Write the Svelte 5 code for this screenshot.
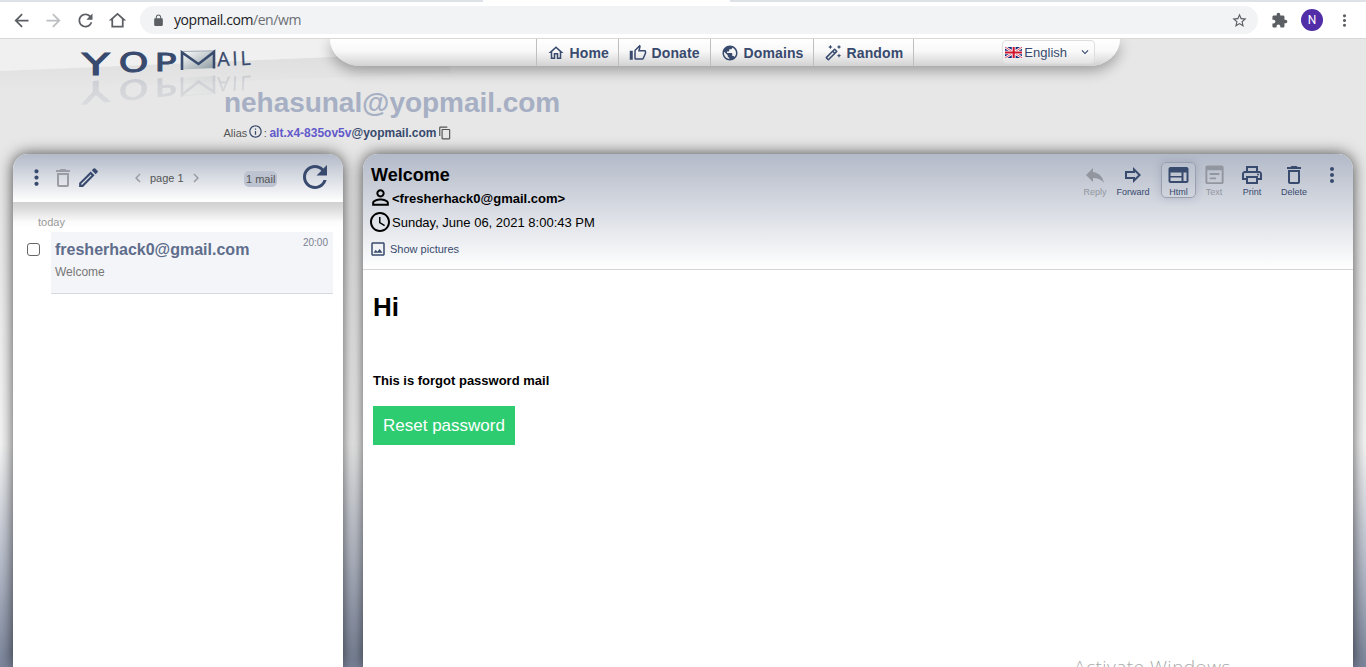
<script>
  const icons = {
    back: 'M20 11H7.83l5.59-5.59L12 4l-8 8 8 8 1.41-1.41L7.83 13H20v-2z',
    next: 'M12 4l-1.41 1.41L16.17 11H4v2h12.17l-5.58 5.59L12 20l8-8z',
    refresh: 'M17.65 6.35C16.2 4.9 14.21 4 12 4c-4.42 0-7.99 3.58-7.99 8s3.57 8 7.99 8c3.73 0 6.84-2.55 7.73-6h-2.08c-.82 2.33-3.04 4-5.65 4-3.31 0-6-2.69-6-6s2.69-6 6-6c1.66 0 3.14.69 4.22 1.78L13 11h7V4l-2.35 2.35z',
    house: 'M12 5.69l5 4.5V18H7v-7.81l5-4.5M12 3L2 12h3v8h14v-8h3L12 3z',
    home: 'M12 5.69l5 4.5V18h-2v-6H9v6H7v-7.81l5-4.5M12 3L2 12h3v8h6v-6h2v6h6v-8h3L12 3z',
    lock: 'M18 8h-1V6c0-2.76-2.24-5-5-5S7 3.24 7 6v2H6c-1.1 0-2 .9-2 2v10c0 1.1.9 2 2 2h12c1.1 0 2-.9 2-2V10c0-1.1-.9-2-2-2zM15.1 8H8.9V6c0-1.71 1.39-3.1 3.1-3.1s3.1 1.39 3.1 3.1v2z',
    star: 'M22 9.24l-7.19-.62L12 2 9.19 8.63 2 9.24l5.46 4.73L5.82 21 12 17.27 18.18 21l-1.63-7.03L22 9.24zM12 15.4l-3.76 2.27 1-4.28-3.32-2.88 4.38-.38L12 6.1l1.71 4.04 4.38.38-3.32 2.88 1 4.28L12 15.4z',
    puzzle: 'M20.5 11H19V7c0-1.1-.9-2-2-2h-4V3.5C13 2.12 11.88 1 10.5 1S8 2.12 8 3.5V5H4c-1.1 0-1.99.9-1.99 2v3.8H3.5c1.49 0 2.7 1.21 2.7 2.7s-1.21 2.7-2.7 2.7H2V20c0 1.1.9 2 2 2h3.8v-1.5c0-1.49 1.21-2.7 2.7-2.7 1.49 0 2.7 1.21 2.7 2.7V22H17c1.1 0 2-.9 2-2v-4h1.5c1.38 0 2.5-1.12 2.5-2.5S21.88 11 20.5 11z',
    more: 'M12 8c1.1 0 2-.9 2-2s-.9-2-2-2-2 .9-2 2 .9 2 2 2zm0 2c-1.1 0-2 .9-2 2s.9 2 2 2 2-.9 2-2-.9-2-2-2zm0 6c-1.1 0-2 .9-2 2s.9 2 2 2 2-.9 2-2-.9-2-2-2z',
    thumb: 'M9 21h9c.83 0 1.54-.5 1.84-1.22l3.02-7.05c.09-.23.14-.47.14-.73v-2c0-1.1-.9-2-2-2h-6.31l.95-4.57.03-.32c0-.41-.17-.79-.44-1.06L14.17 1 7.58 7.59C7.22 7.95 7 8.45 7 9v10c0 1.1.9 2 2 2zM9 9l4.34-4.34L12 10h9v2l-3 7H9V9zM1 9h4v12H1z',
    globe: 'M12 2C6.48 2 2 6.48 2 12s4.48 10 10 10 10-4.48 10-10S17.52 2 12 2zm-1 17.93c-3.95-.49-7-3.85-7-7.93 0-.62.08-1.21.21-1.79L9 15v1c0 1.1.9 2 2 2v1.93zm6.9-2.54c-.26-.81-1-1.39-1.9-1.39h-1v-3c0-.55-.45-1-1-1H8v-2h2c.55 0 1-.45 1-1V7h2c1.1 0 2-.9 2-2v-.41c2.93 1.19 5 4.06 5 7.41 0 2.08-.8 3.97-2.1 5.39z',
    wand: 'M20 7l.94-2.06L23 4l-2.06-.94L20 1l-.94 2.06L17 4l2.06.94zM8.5 7l.94-2.06L11.5 4l-2.06-.94L8.5 1l-.94 2.06L5.5 4l2.06.94zM20 12.5l-.94 2.06-2.06.94 2.06.94.94 2.06.94-2.06L23 15.5l-2.06-.94zM17.71 9.12l-2.83-2.83C14.68 6.1 14.43 6 14.17 6c-.26 0-.51.1-.71.29L2.29 17.46c-.39.39-.39 1.02 0 1.41l2.83 2.83c.2.2.45.3.71.3s.51-.1.71-.29l11.17-11.17c.39-.39.39-1.03 0-1.42zm-3.54-.7l1.41 1.41L14.41 11 13 9.59l1.17-1.17zM5.83 19.59l-1.41-1.41L11.59 11 13 12.41l-7.17 7.18z',
    copy: 'M16 1H4c-1.1 0-2 .9-2 2v14h2V3h12V1zm3 4H8c-1.1 0-2 .9-2 2v14c0 1.1.9 2 2 2h11c1.1 0 2-.9 2-2V7c0-1.1-.9-2-2-2zm0 16H8V7h11v14z',
    info: 'M11 7h2v2h-2zm0 4h2v6h-2zm1-9C6.48 2 2 6.48 2 12s4.48 10 10 10 10-4.48 10-10S17.52 2 12 2zm0 18c-4.41 0-8-3.59-8-8s3.59-8 8-8 8 3.59 8 8-3.59 8-8 8z',
    trash: 'M6 19c0 1.1.9 2 2 2h8c1.1 0 2-.9 2-2V7H6v12zM8 9h8v10H8V9zm7.5-5l-1-1h-5l-1 1H5v2h14V4z',
    edit: 'M14.06 9.02l.92.92L5.92 19H5v-.92l9.06-9.06M17.66 3c-.25 0-.51.1-.7.29l-1.83 1.83 3.75 3.75 1.83-1.83c.39-.39.39-1.02 0-1.41l-2.34-2.34c-.2-.2-.45-.29-.71-.29zm-3.6 3.19L3 17.25V21h3.75L17.81 9.94l-3.75-3.75z',
    left: 'M15.41 7.41L14 6l-6 6 6 6 1.41-1.41L10.83 12z',
    right: 'M10 6L8.59 7.41 13.17 12l-4.58 4.59L10 18l6-6z',
    down: 'M7.41 8.59L12 13.17l4.59-4.58L18 10l-6 6-6-6z',
    person: 'M12 5.9c1.16 0 2.1.94 2.1 2.1s-.94 2.1-2.1 2.1S9.9 9.16 9.9 8s.94-2.1 2.1-2.1m0 9c2.97 0 6.1 1.46 6.1 2.1v1.1H5.9V17c0-.64 3.13-2.1 6.1-2.1M12 4C9.79 4 8 5.79 8 8s1.79 4 4 4 4-1.79 4-4-1.79-4-4-4zm0 9c-2.67 0-8 1.34-8 4v3h16v-3c0-2.66-5.33-4-8-4z',
    clock: 'M11.99 2C6.47 2 2 6.48 2 12s4.47 10 9.99 10C17.52 22 22 17.52 22 12S17.52 2 11.99 2zM12 20c-4.42 0-8-3.58-8-8s3.58-8 8-8 8 3.58 8 8-3.58 8-8 8zm.5-13H11v6l5.25 3.15.75-1.23-4.5-2.67z',
    image: 'M19 5v14H5V5h14m0-2H5c-1.1 0-2 .9-2 2v14c0 1.1.9 2 2 2h14c1.1 0 2-.9 2-2V5c0-1.1-.9-2-2-2zm-4.86 8.86l-3 3.87L9 13.14 6 17h12l-3.86-5.14z',
    reply: 'M10 9V5l-7 7 7 7v-4.1c5 0 8.5 1.6 11 5.1-1-5-4-10-11-11z',
    forward: 'M14 8.83L17.17 12 14 15.17V14H6v-4h8V8.83M12 4v4H4v8h8v4l8-8-8-8z',
    html: 'M20 4H4c-1.1 0-2 .9-2 2v12c0 1.1.9 2 2 2h16c1.1 0 2-.9 2-2V6c0-1.1-.9-2-2-2zM15 18H4v-3.5h11V18zM15 13H4V9.5h11V13zM20 18h-3V9.5h3V18z',
    text: 'M19.5 2h-15C3.1 2 2.5 2.9 2.5 4v15.5c0 1.1.9 2 2 2h15c1.1 0 2-.9 2-2V4c0-1.1-.9-2-2-2zm0 17.5h-15V7h15v12.5zM17 10v2H7v-2zM13.5 14.5v2H7v-2z',
    print: 'M19 8h-1V3H6v5H5c-1.66 0-3 1.34-3 3v6h4v4h12v-4h4v-6c0-1.66-1.34-3-3-3zM8 5h8v3H8V5zm8 12v2H8v-4h8v2zm2-2v-2H6v2H4v-4c0-.55.45-1 1-1h14c.55 0 1 .45 1 1v4h-2zM18 10.5a1 1 0 1 0 0 2 1 1 0 0 0 0-2z'
  };

  const menu = [
    { label: 'Home', icon: 'home', width: 82 },
    { label: 'Donate', icon: 'thumb', width: 92 },
    { label: 'Domains', icon: 'globe', width: 103 },
    { label: 'Random', icon: 'wand', width: 100 }
  ];

  const tools = [
    { label: 'Reply', icon: 'reply', width: 36, off: true },
    { label: 'Forward', icon: 'forward', width: 40 },
    { label: 'Html', icon: 'html', width: 35, on: true },
    { label: 'Text', icon: 'text', width: 36, off: true },
    { label: 'Print', icon: 'print', width: 40 },
    { label: 'Delete', icon: 'trash', width: 44 }
  ];
</script>

{#snippet icon(name, size)}
  <svg class="icon" viewBox="0 0 24 24" width={size} height={size}><path fill-rule={name === 'text' ? 'evenodd' : 'nonzero'} d={icons[name]} /></svg>
{/snippet}

{#snippet wordmark()}
  <g fill="#384a6e" stroke="#384a6e" font-family="DejaVu Sans, sans-serif">
    <text transform="translate(82 35.5) scale(1.53 1)" font-size="29.5" stroke-width="1">Y</text>
    <text transform="translate(118.8 33.2) scale(1.42 1)" font-size="26.5" stroke-width="1">O</text>
    <text transform="translate(154.4 31.8) scale(1.5 1)" font-size="24.5" stroke-width=".8">P</text>
  </g>
  <path d="M181 12.5 214.5 11.8V29L181 30.5Z" fill="url(#paper)" />
  <path d="M181 12.5 214.5 11.8" stroke="#8e98a8" stroke-width=".8" />
  <path d="M182 31V13.5L198.5 25 214 13V29.5" fill="none" stroke="#384a6e" stroke-width="2.6" />
  <text transform="translate(217.5 27.2) rotate(-2.5)" font-size="19.5" textLength="33.5" lengthAdjust="spacing" fill="#384a6e" stroke="#384a6e" stroke-width=".3" font-family="Open Sans, sans-serif">AIL</text>
{/snippet}

<div class="screen">
  <div class="chrome">
    <div class="tabs"><i></i></div>
    <div class="bar">
      <div class="nav">
        {@render icon('back', 21)}
        <span class="faded">{@render icon('next', 21)}</span>
        {@render icon('refresh', 21)}
        {@render icon('house', 21)}
      </div>
      <div class="address">
        <span class="lock">{@render icon('lock', 13)}</span>
        <span class="url">yopmail.com<em>/en/wm</em></span>
        {@render icon('star', 17)}
      </div>
      <div class="extras">
        {@render icon('puzzle', 17)}
        <b class="avatar">N</b>
        {@render icon('more', 19)}
      </div>
    </div>
  </div>

  <div class="page">
    <svg class="slope" width="900" height="60" viewBox="0 0 900 60">
      <defs>
        <linearGradient id="fold" x1="0" y1="0" x2="0" y2="1">
          <stop offset="0" stop-color="#dedede" /><stop offset="1" stop-color="#e7e7e7" />
        </linearGradient>
      </defs>
      <path d="M0 32 L450 13 V34 L0 52Z" fill="url(#fold)" />
      <path d="M0 0H450V13L0 32Z" fill="#f0f0f0" />
    </svg>

    <header>
      <svg class="logo" width="224" height="75" viewBox="0 0 224 75">
        <defs>
          <linearGradient id="paper" x1="0" y1="0" x2="1" y2="1">
            <stop offset="0" stop-color="#fff" /><stop offset="1" stop-color="#8b999f" />
          </linearGradient>
          <linearGradient id="fade" x1="0" y1="34" x2="0" y2="67" gradientUnits="userSpaceOnUse">
            <stop offset="0" stop-color="#fff" stop-opacity=".16" /><stop offset="1" stop-color="#fff" stop-opacity=".07" />
          </linearGradient>
          <mask id="mirror" maskUnits="userSpaceOnUse" x="60" y="20" width="220" height="60">
            <rect x="60" y="20" width="220" height="60" fill="url(#fade)" />
          </mask>
        </defs>
        {@render wordmark()}
        <g mask="url(#mirror)"><g transform="matrix(1 -.1 0 -1 0 87.5)">{@render wordmark()}</g></g>
      </svg>

      <div class="main">
        <nav class="menu">
          {#each menu as item}
            <a style:width="{item.width}px">{@render icon(item.icon, 18)}<span>{item.label}</span></a>
          {/each}
          <div class="end"></div>
          <div class="lang">
            <svg width="18" height="11" viewBox="0 0 18 12" preserveAspectRatio="none">
              <rect width="18" height="12" fill="#14297c" />
              <path d="M0 0 18 12M18 0 0 12" stroke="#fff" stroke-width="2.6" />
              <path d="M0 0 18 12M18 0 0 12" stroke="#d0142c" stroke-width=".8" />
              <path d="M9 0V12M0 6H18" stroke="#fff" stroke-width="4" />
              <path d="M9 0V12M0 6H18" stroke="#d0142c" stroke-width="2.2" />
            </svg>
            <span>English</span>
            {@render icon('down', 14)}
          </div>
        </nav>
        <h1>nehasunal@yopmail.com</h1>
        <div class="alias">
          <span>Alias</span><span class="info">{@render icon('info', 15)}</span><span class="colon">:</span>
          <b><i>alt.x4-835ov5v</i>@yopmail.com</b>{@render icon('copy', 14)}
        </div>
      </div>
    </header>

    <main>
      <aside class="panel inbox">
        <div class="listbar">
          {@render icon('more', 25)}
          <span class="trash">{@render icon('trash', 24)}</span>
          {@render icon('edit', 25)}
          <div class="pager">{@render icon('left', 18)}<span>page 1</span>{@render icon('right', 18)}</div>
          <span class="count">1 mail</span>
          <span class="reload">{@render icon('refresh', 36)}</span>
        </div>
        <div class="list">
          <div class="day">today</div>
          <div class="mail">
            <span class="check"></span>
            <div class="card">
              <div class="line"><b>fresherhack0@gmail.com</b><small>20:00</small></div>
              <p>Welcome</p>
            </div>
          </div>
        </div>
      </aside>

      <section class="panel reader">
        <div class="head">
          <div class="meta">
            <h2>Welcome</h2>
            <div class="from">{@render icon('person', 25)}<b>&lt;fresherhack0@gmail.com&gt;</b></div>
            <div class="date">{@render icon('clock', 24)}<span>Sunday, June 06, 2021 8:00:43 PM</span></div>
            <div class="pics">{@render icon('image', 18)}<span>Show pictures</span></div>
          </div>
          <div class="tools">
            {#each tools as t}
              <div class="tool" class:off={t.off} class:on={t.on} style:width="{t.width}px">
                {@render icon(t.icon, t.icon === 'text' ? 23 : t.icon === 'html' ? 25 : 24)}<span>{t.label}</span>
              </div>
            {/each}
            <div class="dots">{@render icon('more', 24)}</div>
          </div>
        </div>
        <article>
          <h3>Hi</h3>
          <p>This is forgot password mail</p>
          <a>Reset password</a>
        </article>
      </section>
    </main>
  </div>
  <div class="watermark">Activate Windows</div>
</div>

<style>
  :global(body) { margin: 0; overflow: hidden; }
  .screen, .screen * { box-sizing: border-box; }
  .screen {
    position: relative; display: flex; flex-direction: column;
    width: 1366px; height: 667px; overflow: hidden;
    font-family: "Liberation Sans", Arial, sans-serif; color: #384a6e;
  }
  .icon { display: block; flex: none; fill: currentColor; }
  em, i { font-style: normal; }

  .chrome { height: 39px; background: #fff; border-bottom: 1px solid #d8d8d8; color: #5b5f64; }
  .tabs { height: 2px; background: #dee1e6; padding-left: 483px; }
  .tabs i { display: block; width: 247px; height: 2px; background: #fff; }
  .bar { display: flex; align-items: center; height: 36px; }
  .nav { display: flex; gap: 11px; padding-left: 11px; width: 140px; }
  .faded { color: #bcbec1; }
  .address {
    display: flex; align-items: center; width: 1118px; height: 28px; padding: 0 10px 0 12px;
    border-radius: 14px; background: #f1f3f4;
  }
  .url { flex: 1; margin-left: 9px; font: 14px/20px "Open Sans", "Noto Sans", sans-serif; letter-spacing: -.42px; color: #202124; }
  .url em { color: #6b6f74; }
  .extras { display: flex; align-items: center; padding-left: 13px; }
  .avatar {
    width: 22px; height: 22px; margin: 0 12px 0 13px; border-radius: 50%; background: #512da8; color: #fff;
    font: 12px/22px Roboto, sans-serif; text-align: center;
  }

  .page {
    position: relative; display: flex; flex-direction: column; height: 628px;
    background: linear-gradient(#e7e7e7 0, #e7e7e7 120px, #f8f8f8 405px, #b9bfcd 525px, #7c869c 628px);
  }
  .slope { position: absolute; left: 0; top: 0; }
  header { position: relative; display: flex; height: 115.5px; }
  .logo { flex: none; overflow: visible; }
  .menu {
    display: flex; width: 790px; height: 27px; margin-left: 106px; padding-left: 206px;
    border-radius: 0 0 30px 30px / 0 0 27px 27px;
    background: linear-gradient(#fff, #f8f8f8 45%, #d2d2d2);
    box-shadow: 0 5px 14px rgba(0, 0, 0, .32);
    clip-path: inset(0 -30px -30px -30px);
  }
  .menu a, .end { display: flex; align-items: center; border-left: 1px solid #bfbfbf; }
  .menu a { padding-left: 10px; gap: 4.5px; font: bold 14px/27px "Liberation Sans", sans-serif; letter-spacing: .12px; }
  .menu a span { padding-top: 1px; }
  .end { width: 89px; }
  .lang {
    display: flex; align-items: center; width: 93px; height: 24px; margin-top: 1px; padding: 0 2px;
    border: 1px solid #dedede; border-radius: 4px; font-size: 13px; background: rgba(255, 255, 255, .25);
  }
  .lang span { margin: 0 11px 0 2px; }
  h1 { margin: 21px 0 0; font-size: 28px; line-height: 32px; letter-spacing: -.04px; color: #a6afc3; }
  .alias { display: flex; align-items: center; height: 20px; margin: 4px 0 0 -.5px; font-size: 11px; color: #555; }
  .info { margin: -4px 0 0 .5px; color: #384a6e; }
  .colon { margin: 0 2.5px 0 1px; }
  .alias b { font-size: 12px; color: #384a6e; margin-right: 1px; }
  .alias b i { color: #6259ca; }

  main { position: relative; display: flex; gap: 20px; height: 513px; padding-left: 13px; }
  .panel { background: #fff; border-radius: 15px 15px 0 0; box-shadow: 0 0 15px rgba(0, 0, 0, .7); }
  .inbox { width: 330px; }
  .listbar {
    position: relative; display: flex; align-items: center; height: 47.5px; padding: 0 0 1px 11px; border-radius: 15px 15px 0 0;
    background: linear-gradient(#b3bac8, #fff);
  }
  .list { background: linear-gradient(#d0d0d0 0, #dadada 6px, #fbfbfb 20px, #fff 26px); }
  .trash { margin: 0 1px 0 1.5px; color: #9a9da4; }
  .pager { display: flex; align-items: center; margin-left: 28.5px; font-size: 11px; color: #555; gap: 3px; }
  .pager .icon { color: #9a9da6; }
  .count { margin: 2px 0 0 39.5px; width: 33px; height: 16px; border-radius: 5px; background: #bdc3d0; color: #555; font-size: 11px; line-height: 16px; text-align: center; white-space: nowrap; }
  .reload { margin: -2px 0 0 19.5px; }
  .day { padding: 13px 0 0 25px; height: 30px; font-size: 11px; line-height: 14px; color: #999; }
  .mail { display: flex; }
  .check { width: 13px; height: 13px; margin: 11px 11px 0 14px; border: 1px solid #666; border-radius: 3px; background: #fff; }
  .card { width: 282px; height: 62px; padding: 9px 5px 0 4px; background: #f4f5f8; border-bottom: 1px solid #d5d9e2; }
  .line { display: flex; justify-content: space-between; }
  .line b { font-size: 16px; line-height: 18px; color: #5e6d8c; }
  .line small { font-size: 10px; line-height: 12px; margin-top: -4px; color: #7a8091; }
  .card p { margin: 6px 0 0; font-size: 12px; line-height: 15px; color: #777; }

  .reader { width: 990px; color: #000; }
  .head {
    display: flex; justify-content: space-between; height: 115.5px; border-bottom: 1px solid #d5d5d5;
    border-radius: 15px 15px 0 0; background: linear-gradient(#b3bac8, #fff);
  }
  .meta { padding: 9.5px 0 0 8px; }
  h2 { margin: 0 0 1px; font-size: 18px; line-height: 22px; }
  .from, .date, .pics { display: flex; align-items: center; font-size: 13px; height: 24px; }
  .from .icon { margin: -2px -1px 0 -3px; }
  .date .icon { margin: -1px .5px 0 -3.5px; }
  .pics { margin-top: 2px; font-size: 11px; color: #384a6e; }
  .pics .icon { margin: 0 3px 0 -2px; }
  .tools { display: flex; align-items: flex-start; padding: 7.5px 9px 0 0; color: #384a6e; }
  .tool { display: flex; flex-direction: column; align-items: center; height: 36px; border: 1px solid transparent; border-radius: 5px; font-size: 9px; }
  .tool .icon { height: 24px; }
  .tool span { line-height: 10px; white-space: nowrap; }
  .on { margin-left: 8px; border-color: #9aa0b0; box-shadow: 0 0 8px rgba(60, 70, 110, .22); }
  .off { color: #92969f; }
  .dots { margin: 1px 0 0 4px; }
  article { padding: 22px 10px; }
  h3 { margin: 0; font-size: 26px; line-height: 30px; }
  article p { margin: 51px 0 17px; font: bold 13px/16px "Liberation Sans", sans-serif; }
  article a { display: inline-block; height: 39px; padding: 0 10px; background: #2ecc71; color: #fff; font-size: 17px; line-height: 39px; }
  .watermark { position: absolute; left: 1074px; top: 654px; font: 19px/26px "Open Sans", sans-serif; font-weight: 300; letter-spacing: .48px; color: #aaa; white-space: nowrap; }
</style>
